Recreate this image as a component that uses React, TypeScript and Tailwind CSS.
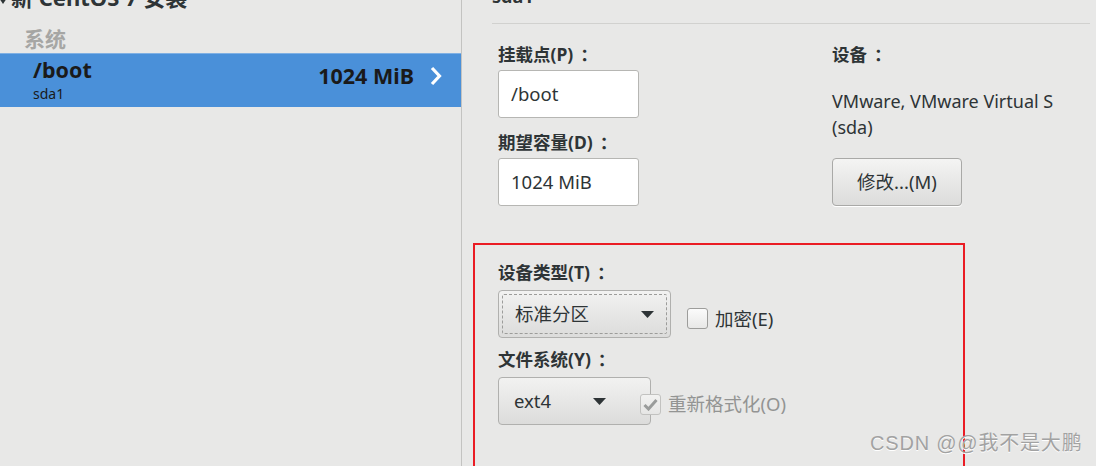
import React from "react";

const font = "font-['Noto_Sans','Noto_Sans_CJK_SC',sans-serif]";

const Arrow = () => (
  <svg width="13" height="7" viewBox="0 0 13 7" className="shrink-0">
    <path d="M0 0 H13 L6.5 7 Z" fill="#2e3436" />
  </svg>
);

const Checkbox = ({ checked, disabled }: { checked?: boolean; disabled?: boolean }) => (
  <div
    className={`w-[21px] h-[21px] rounded-[3px] border flex items-center justify-center ${
      disabled
        ? "border-[#c2c2c0] bg-gradient-to-b from-[#f2f2f1] to-[#e6e6e5]"
        : "border-[#9d9d9b] bg-gradient-to-b from-[#fbfbfb] to-[#e8e8e7]"
    }`}
  >
    {checked && (
      <svg width="15" height="13" viewBox="0 0 15 13">
        <path d="M1.5 7 L5.5 11 L13.5 2" stroke="#9a9c9b" strokeWidth="3" fill="none" />
      </svg>
    )}
  </div>
);

const Label = ({ text }: { text: string }) => (
  <div className="text-[17.5px] leading-[24px] font-bold text-[#2e3436] whitespace-nowrap">
    {text}
    <span className="ml-[7px]">：</span>
  </div>
);

const Field = ({ value }: { value: string }) => (
  <div className="w-[141px] h-[48px] bg-white border border-[#b6b6b3] rounded-[3px] flex items-center pl-[12px] text-[18.5px] text-[#2e3436]">
    {value}
  </div>
);

export default function App() {
  return (
    <div className={`w-[1096px] h-[466px] overflow-hidden bg-[#e8e8e7] flex relative ${font}`}>
      {/* left: partition list */}
      <div className="w-[462px] shrink-0 border-r border-[#c3c3c1] flex flex-col">
        <div className="-mt-[15px] h-[23px] flex items-center gap-[4px] text-[22px] leading-[26px] font-bold text-[#2e3436] whitespace-nowrap">
          <svg width="8" height="6" viewBox="0 0 8 6" className="mt-[8px] -ml-[1px]">
            <path d="M0 0 H8 L4 6 Z" fill="#2e3436" />
          </svg>
          <span>新 CentOS 7 安装</span>
        </div>
        <div className="mt-[18px] h-[27px] pl-[24px] text-[21px] leading-[26px] font-bold text-[#a6a6a4]">系统</div>
        <div className="h-[54px] bg-[#4a90d9] border-t border-[#7fb0e4] flex items-center pl-[33px] pr-[18px] text-[#1a1a1a]">
          <div className="flex-1 flex flex-col">
            <span className="text-[21.5px] leading-[24px] font-bold">/boot</span>
            <span className="text-[14px] leading-[20px] mt-[2px]">sda1</span>
          </div>
          <span className="text-[21.5px] font-bold mt-[-9px]">1024 MiB</span>
          <svg width="14" height="20" viewBox="0 0 14 20" className="ml-[15px] mt-[-9px]">
            <path d="M3 2 L10.5 10 L3 18" stroke="#ffffff" strokeWidth="3.2" fill="none" />
          </svg>
        </div>
      </div>

      {/* right: partition details */}
      <div className="flex-1 pl-[11px] pr-[6px] flex flex-col">
        <div className="-mt-[16px] pl-[19px] text-[18px] leading-[24px] font-bold text-[#2e3436]">sda1</div>
        <div className="mt-[15px] ml-[19px] border-t border-[#d1d1cf]" />

        <div className="pl-[25px] mt-[18px] flex">
          <div className="w-[334px] flex flex-col">
            <Label text="挂载点(P)" />
            <div className="mt-[4px]">
              <Field value="/boot" />
            </div>
            <div className="mt-[12px]">
              <Label text="期望容量(D)" />
            </div>
            <div className="mt-[4px]">
              <Field value="1024 MiB" />
            </div>
          </div>
          <div className="flex flex-col">
            <Label text="设备" />
            <div className="mt-[22px] text-[18px] leading-[26px] text-[#2e3436] whitespace-nowrap">
              VMware, VMware Virtual S
              <br />
              (sda)
            </div>
            <button className="mt-[18px] w-[130px] h-[48px] rounded-[4px] border border-[#a9a9a7] bg-gradient-to-b from-[#f4f4f3] to-[#dcdcdb] shadow-[0_1px_0_#ffffff] text-[18.5px] text-[#2e3436]">
              修改...(M)
            </button>
          </div>
        </div>

        <div className="mt-[37px] w-[492px] h-[260px] shrink-0 border-2 border-[#ea1c24] pl-[23px] pt-[15px] flex flex-col">
          <Label text="设备类型(T)" />
          <div className="mt-[6px] flex items-center">
            <div className="w-[173px] h-[48px] rounded-[4px] border border-[#b0b0ae] bg-gradient-to-b from-[#f2f2f1] to-[#dcdcdb] p-[3px]">
              <div className="h-full border border-dashed border-[#9c9c9a] rounded-[2px] flex items-center pl-[12px] pr-[12px] text-[18.5px] text-[#2e3436]">
                <span className="flex-1">标准分区</span>
                <Arrow />
              </div>
            </div>
            <div className="ml-[16px] mt-[9px] flex items-center gap-[7px]">
              <Checkbox />
              <span className="text-[18.5px] text-[#2e3436]">加密(E)</span>
            </div>
          </div>
          <div className="mt-[9px]">
            <Label text="文件系统(Y)" />
          </div>
          <div className="mt-[6px] flex items-center">
            <div className="w-[153px] h-[48px] rounded-[4px] border border-[#b0b0ae] bg-gradient-to-b from-[#f2f2f1] to-[#dcdcdb] flex items-center pl-[15px] pr-[44px] text-[18.5px] text-[#2e3436]">
              <span className="flex-1">ext4</span>
              <Arrow />
            </div>
            <div className="ml-[-11px] mt-[6px] flex items-center gap-[7px]">
              <Checkbox checked disabled />
              <span className="text-[18.5px] text-[#939493]">重新格式化(O)</span>
            </div>
          </div>
        </div>
      </div>

      <div className="absolute left-[870px] top-[429px] text-[20px] leading-[28px] text-[#a2a2a2] tracking-[0.8px] [text-shadow:0_1px_0_#ffffff] font-['Liberation_Sans','Noto_Sans_CJK_SC',sans-serif] whitespace-nowrap">
        CSDN @@我不是大鹏
      </div>
    </div>
  );
}
